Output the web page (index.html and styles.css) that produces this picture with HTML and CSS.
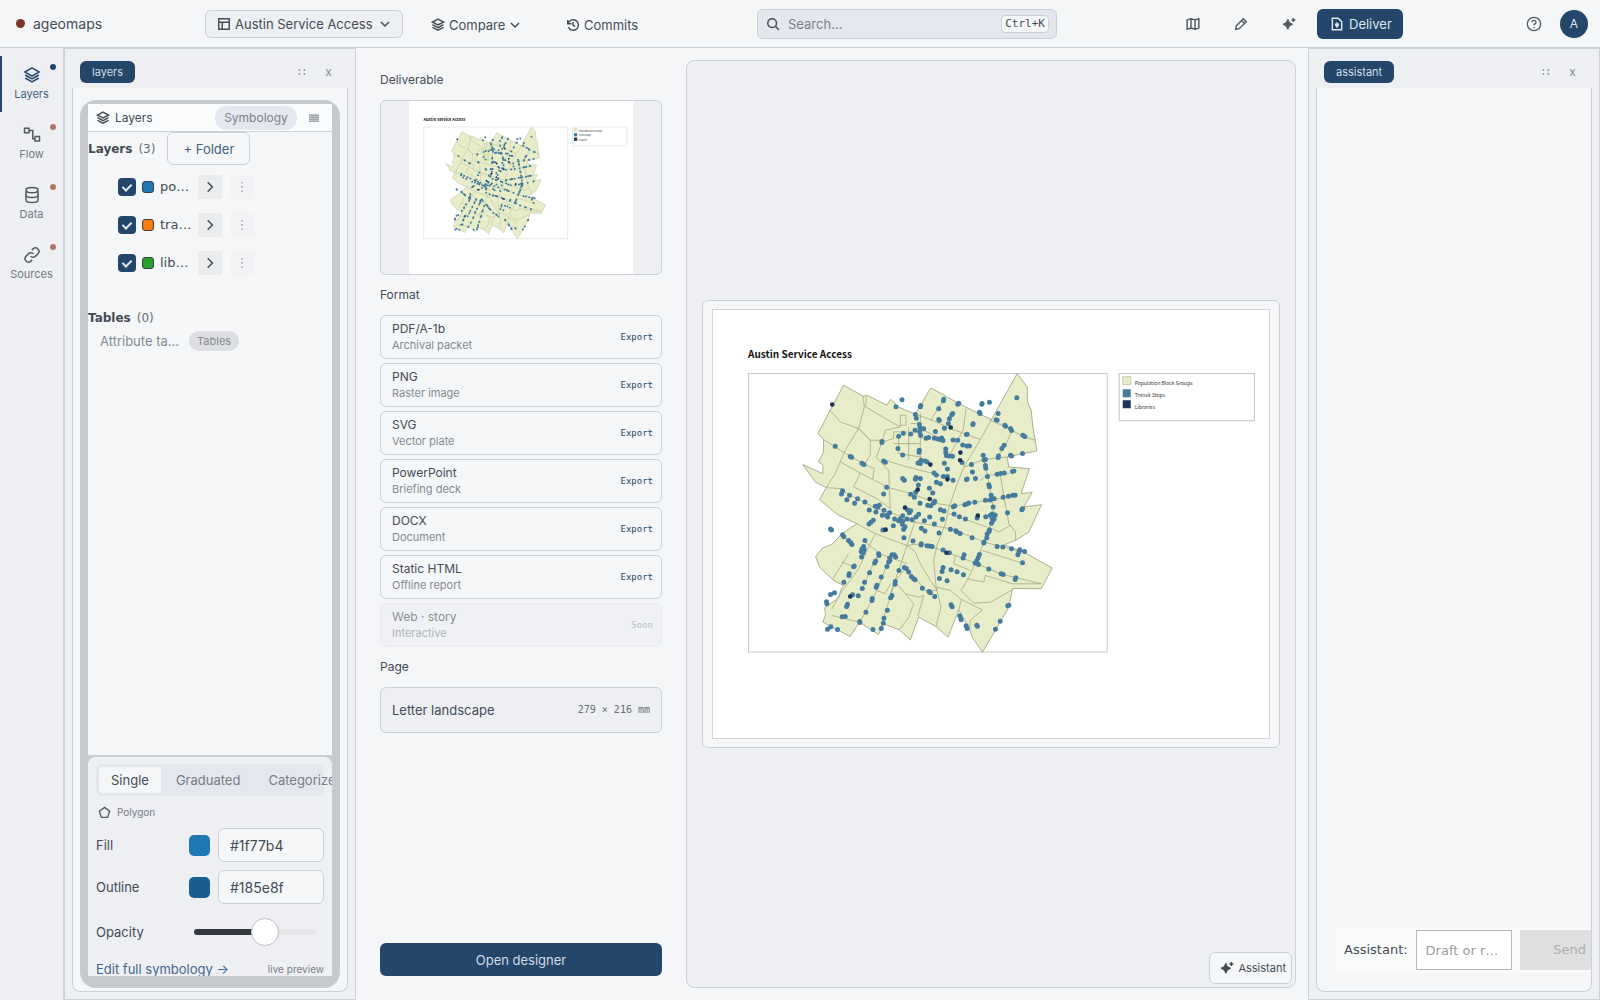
FILE: index.html
```html
<!DOCTYPE html>
<html lang="en">
<head>
<meta charset="utf-8">
<title>ageomaps</title>
<link rel="stylesheet" href="styles.css">
</head>
<body>
<svg class="defs" aria-hidden="true">
  <symbol id="i-layers" viewBox="0 0 24 24"><path d="M12 2.500 21.500 8 12 13.500 2.500 8ZM3 12l9 5.200L21 12M3 16l9 5.200L21 16"/></symbol>
  <symbol id="i-stack" viewBox="0 0 24 24"><path d="M12 2 21.500 7 12 12 2.500 7ZM2.500 11.500l9.500 5 9.500-5M2.500 16l9.500 5 9.500-5"/></symbol>
  <symbol id="i-flow" viewBox="0 0 24 24"><path d="M2 3h6v6H2zM16 14h6v6h-6zM8 6h5v11h3"/></symbol>
  <symbol id="i-data" viewBox="0 0 24 24"><path d="M4 5.500C4 1 20 1 20 5.500v13C20 23 4 23 4 18.500ZM4 5.500C4 10 20 10 20 5.500M4 12c0 4.500 16 4.500 16 0"/></symbol>
  <symbol id="i-link" viewBox="0 0 24 24"><path d="M10 13.500a4.500 4.500 0 0 0 6.500.3l3.500-3.500a4.600 4.600 0 0 0-6.500-6.500L11.800 5.500M14 10.500a4.500 4.500 0 0 0-6.500-.3L4 13.700a4.600 4.600 0 0 0 6.500 6.500l1.700-1.700"/></symbol>
  <symbol id="i-layout" viewBox="0 0 24 24"><path d="M3 3h18v18H3zM3 9h18M9 9v12"/></symbol>
  <symbol id="i-down" viewBox="0 0 24 24"><path d="m4 8 8 8 8-8"/></symbol>
  <symbol id="i-right" viewBox="0 0 24 24"><path d="m8 4 8 8-8 8"/></symbol>
  <symbol id="i-history" viewBox="0 0 24 24"><path d="M3.500 10A9 9 0 1 1 4 15.500M3 3.500V10h6.500M12 7v5.500l4 2"/></symbol>
  <symbol id="i-search" viewBox="0 0 24 24"><circle cx="10.500" cy="10.500" r="7.500"/><path d="m16 16 6 6"/></symbol>
  <symbol id="i-map" viewBox="0 0 24 24"><path d="m2 5 6.500-2 7 2L22 3v16l-6.500 2-7-2L2 21ZM8.500 3v16M15.500 5v16"/></symbol>
  <symbol id="i-pencil" viewBox="0 0 24 24"><path d="m3 21 1-6L16 3l5 5L9 20ZM13 6l5 5"/></symbol>
  <symbol id="i-spark" viewBox="0 0 24 24"><path fill="currentColor" d="M10 4c.6 5 3 7.500 8 8.500-5 1-7.400 3.500-8 8.500-.6-5-3-7.500-8-8.500 5-1 7.400-3.500 8-8.500Z"/><path d="M19.500 1.500v7M16 5h7"/></symbol>
  <symbol id="i-file" viewBox="0 0 24 24"><path d="M4 2h10l6 6v14H4zM12 9v7m-3.500-3.500h7M9.500 13l2.500 4 2.500-4"/></symbol>
  <symbol id="i-help" viewBox="0 0 24 24"><circle cx="12" cy="12" r="10"/><path d="M9 9.500c0-4 6-4 6 0 0 2.300-3 2.300-3 4.700M12 16.500v2"/></symbol>
  <symbol id="i-menu" viewBox="0 0 24 24"><path d="M2 6h20M2 10h20M2 14h20M2 18h20"/></symbol>
  <symbol id="i-poly" viewBox="0 0 24 24"><path d="m12 2.500 9.500 7-3.700 11.500H6.200L2.500 9.500Z"/></symbol>
  <symbol id="plate" viewBox="0 0 557 430">
    <path fill="#fff" d="M0 0h557v430H0z"/>
    <text x="36" y="49" class="plate-title">Austin Service Access</text>
    <path class="plate-frame" d="M36.500 64.500h358v278h-358zM406.500 64.500h135v47h-135z"/>
    <path fill="#e7edc8" stroke="#a9ad88" stroke-width=".5" d="M410 67.500h8v8h-8z"/>
    <path fill="#457b9d" d="M410 80h8v8h-8z"/>
    <path fill="#1d3557" d="M410 91h8v8h-8z"/>
    <g class="plate-key"><text x="422" y="76">Population Block Groups</text><text x="422" y="88">Transit Stops</text><text x="422" y="100">Libraries</text></g>
    <g transform="translate(78 51) scale(.3333)">
      <path class="land" d="M160 75 218 108 232 106 290 135 300 118 312 126 318 138 375 162 421 83 500 127 565 160 603 178 680 40 710 80 711 125 722 150 727 200 739 272 650 290 655 320 717 325 700 375 692 400 725 396 700 440 753 433 715 515 675 540 642 553 700 575 785 623 752 685 666 684 655 740 620 800 576 875 545 830 537 805 505 748 473 830 435 797 385 770 360 838 327 808 280 790 265 822 208 785 180 828 98 785 106 762 103 742 145 712 152 688 160 675 130 660 88 620 76 588 98 562 125 552 155 520 200 490 145 465 88 418 108 382 75 365 38 313 98 340 98 315 85 305 100 275 100 238 83 220 120 150Z"/>
      <path class="bounds" d="M120 150 150 185 205 205 240 240H275M218 108 222 140 205 205 165 270 135 340 108 382 155 385M205 205 240 240 240 285 222 312M100 238 150 270 222 312 252 325 247 355M150 305 210 338 295 382M210 338 190 380 260 415 300 445 295 330 258 292 275 245 285 210 330 200V165h17v30h-15M228 110 226 140 260 160 290 178 330 200M275 245 310 235v-20h40M310 250h80M325 230v50l65 10M355 200v100M390 160v140M375 162 390 205 460 240M421 180 440 150 461 118M361 190h30v40M285 300 350 320 430 340 490 360M527 145 518 210 475 290M375 162 430 182 480 205 570 238M603 178 570 238 520 320 495 385 475 445 465 490 440 555 430 600 437 680 452 740 437 797M290 380 370 402 440 430 490 437 605 418 680 405M520 320 580 298 650 290M570 360 590 345 655 340M600 180 655 205 700 230 735 240M665 210 645 255 620 290M630 345 640 410 650 460 655 490 675 515V540M580 298 592 350 605 420 610 470 580 545 555 610 530 660 512 690 550 728 600 725 666 688M580 545 700 575M575 570 695 608M155 390 190 410 250 440 310 460 370 485 480 505 545 530 580 545M200 490 255 520 350 555 395 550 470 575 560 610 630 640 752 670M475 460 590 500M255 520 230 570 205 625 150 700 125 745M225 545 270 580 350 610M265 580 235 640 215 690M300 590 255 700 225 755 208 785M350 620 315 660 290 740 270 805M375 480 350 555 325 630 300 700M350 555 375 575 390 610 420 660 440 690M437 680 480 690 513 717 575 748 540 780 537 805M340 620 380 660 405 690 440 690M530 655 580 665 585 645 665 670 752 670M495 585 490 610 540 630M513 717 505 748M300 670 285 700 260 690M315 665 345 700 385 710 400 705 382 768M345 700 370 730 355 770 327 808M125 765 208 785M155 605 195 620M175 580 128 655M605 505 625 515 660 495"/>
      <path class="stops" d="M335 119h0M317 140h0M391 136h0M390 140h0M460 117h0M459 122h0M445 146h0M505 129h0M502 132h0M575 130h0M574 132h0M597 126h0M567 156h0M569 160h0M679 113h0M623 160h0M617 179h0M620 180h0M375 163h0M378 174h0M487 160h0M484 164h0M477 176h0M445 178h0M447 180h0M474 190h0M462 204h0M548 191h0M547 193h0M643 195h0M645 198h0M660 205h0M663 211h0M697 225h0M703 229h0M387 193h0M389 203h0M400 206h0M388 215h0M391 226h0M374 210h0M361 221h0M339 219h0M325 228h0M435 214h0M530 222h0M528 223h0M407 234h0M415 232h0M432 234h0M443 236h0M454 233h0M458 241h0M449 238h0M488 239h0M502 240h0M517 254h0M530 257h0M537 257h0M275 244h0M275 247h0M135 258h0M323 265h0M337 284h0M387 270h0M386 276h0M466 266h0M466 276h0M468 286h0M477 287h0M486 288h0M641 255h0M634 265h0M624 287h0M623 292h0M660 285h0M663 287h0M696 280h0M578 285h0M585 298h0M581 299h0M180 289h0M184 291h0M215 309h0M221 313h0M280 302h0M285 306h0M383 308h0M392 300h0M390 310h0M405 302h0M410 305h0M462 309h0M471 326h0M515 307h0M543 313h0M546 335h0M585 316h0M586 324h0M431 338h0M438 344h0M459 349h0M471 349h0M488 360h0M530 356h0M528 358h0M555 355h0M591 349h0M620 342h0M630 340h0M641 338h0M666 334h0M670 332h0M337 355h0M342 360h0M377 352h0M375 357h0M390 355h0M384 374h0M438 366h0M450 370h0M417 384h0M427 398h0M289 381h0M280 401h0M361 402h0M376 396h0M372 411h0M595 373h0M597 379h0M157 391h0M154 401h0M178 405h0M170 418h0M202 415h0M193 429h0M224 425h0M389 429h0M433 423h0M430 428h0M412 435h0M421 436h0M602 405h0M604 415h0M611 415h0M599 419h0M585 420h0M638 411h0M654 408h0M667 405h0M674 405h0M553 426h0M535 428h0M529 431h0M523 433h0M493 436h0M489 439h0M608 440h0M696 445h0M694 448h0M651 457h0M267 435h0M255 438h0M262 441h0M237 449h0M257 455h0M281 450h0M298 457h0M276 465h0M289 465h0M292 470h0M352 449h0M361 451h0M357 457h0M385 462h0M450 448h0M461 452h0M491 461h0M507 469h0M525 476h0M456 477h0M418 470h0M402 481h0M432 491h0M377 470h0M365 478h0M350 476h0M337 466h0M330 475h0M337 483h0M325 481h0M313 476h0M336 492h0M344 499h0M340 507h0M309 496h0M249 480h0M242 486h0M236 491h0M278 509h0M341 532h0M368 542h0M393 504h0M404 512h0M446 518h0M586 469h0M600 465h0M605 461h0M614 464h0M605 473h0M611 476h0M606 483h0M603 489h0M597 508h0M596 513h0M590 521h0M589 532h0M581 545h0M580 548h0M560 473h0M480 507h0M496 511h0M499 514h0M509 519h0M545 532h0M121 506h0M124 509h0M157 523h0M161 529h0M175 540h0M181 546h0M185 552h0M224 540h0M220 558h0M215 566h0M222 567h0M213 574h0M219 577h0M214 590h0M393 550h0M392 554h0M410 556h0M417 557h0M425 558h0M458 569h0M477 577h0M521 583h0M518 593h0M567 582h0M563 592h0M559 601h0M554 608h0M564 612h0M620 558h0M637 560h0M663 565h0M688 568h0M685 575h0M682 583h0M702 573h0M696 607h0M595 626h0M632 640h0M638 642h0M676 652h0M674 657h0M265 580h0M266 585h0M256 602h0M253 608h0M238 637h0M192 617h0M190 619h0M177 640h0M176 645h0M161 665h0M223 665h0M216 684h0M260 674h0M258 680h0M273 650h0M305 583h0M312 583h0M298 593h0M299 600h0M295 605h0M290 618h0M316 590h0M326 630h0M342 621h0M348 624h0M355 635h0M363 648h0M370 655h0M374 658h0M315 663h0M314 671h0M305 705h0M301 712h0M396 683h0M416 693h0M420 697h0M433 708h0M458 621h0M455 633h0M447 654h0M470 661h0M482 628h0M500 634h0M519 643h0M121 702h0M133 697h0M109 724h0M110 730h0M187 703h0M204 706h0M246 714h0M245 720h0M172 731h0M169 738h0M227 755h0M291 749h0M281 773h0M279 788h0M273 804h0M248 807h0M208 783h0M209 786h0M156 769h0M165 768h0M112 806h0M122 799h0M142 807h0M482 733h0M485 739h0M508 766h0M511 773h0M512 778h0M527 796h0M530 804h0M559 794h0M561 797h0M655 734h0M652 736h0M629 782h0M615 806h0"/>
      <path class="libs" d="M126 133h0M481 202h0M510 277h0M509 300h0M420 313h0M471 357h0M382 388h0M418 416h0M344 442h0M562 466h0M286 508h0M468 577h0M180 708h0"/>
    </g>
  </symbol>
</svg>

<header class="top">
  <div class="brand"><span class="brand-dot"></span>ageomaps</div>
  <button class="project"><svg class="ico"><use href="#i-layout"/></svg>Austin Service Access<svg class="ico chev"><use href="#i-down"/></svg></button>
  <button class="plain compare"><svg class="ico"><use href="#i-stack"/></svg>Compare<svg class="ico chev"><use href="#i-down"/></svg></button>
  <button class="plain commits"><svg class="ico"><use href="#i-history"/></svg>Commits</button>
  <label class="search"><svg class="ico"><use href="#i-search"/></svg><input type="text" placeholder="Search..." aria-label="Search"><kbd>Ctrl+K</kbd></label>
  <div class="tools">
    <button class="tool" aria-label="Map"><svg class="ico"><use href="#i-map"/></svg></button>
    <button class="tool" aria-label="Edit"><svg class="ico"><use href="#i-pencil"/></svg></button>
    <button class="tool" aria-label="Generate"><svg class="ico"><use href="#i-spark"/></svg></button>
  </div>
  <button class="deliver"><svg class="ico"><use href="#i-file"/></svg>Deliver</button>
  <div class="account">
    <button class="tool" aria-label="Help"><svg class="ico help"><use href="#i-help"/></svg></button>
    <button class="avatar">A</button>
  </div>
</header>

<div class="shell">
  <nav class="rail">
    <a href="#layers" class="active"><svg class="ico"><use href="#i-layers"/></svg>Layers</a>
    <a href="#flow"><svg class="ico"><use href="#i-flow"/></svg>Flow</a>
    <a href="#data"><svg class="ico"><use href="#i-data"/></svg>Data</a>
    <a href="#sources"><svg class="ico"><use href="#i-link"/></svg>Sources</a>
  </nav>

  <section class="dock left">
    <div class="dock-bar"><button class="tab">layers</button><button class="mini">∷</button><button class="mini">x</button></div>
    <div class="dock-body">
      <div class="frame">
        <div class="frame-head"><svg class="ico"><use href="#i-stack"/></svg><span class="grow">Layers</span><button class="chip">Symbology</button><button class="tool burger" aria-label="Menu"><svg class="ico"><use href="#i-menu"/></svg></button></div>
        <div class="tree">
          <div class="tree-head"><b>Layers</b><span>(3)</span><button class="folder">+ Folder</button></div>
          <ul>
            <li><label><input type="checkbox" checked><i class="swatch blue"></i><span>po…</span></label><button class="open" aria-label="Open"><svg class="ico"><use href="#i-right"/></svg></button><button class="more">⋮</button></li>
            <li><label><input type="checkbox" checked><i class="swatch orange"></i><span>tra…</span></label><button class="open" aria-label="Open"><svg class="ico"><use href="#i-right"/></svg></button><button class="more">⋮</button></li>
            <li><label><input type="checkbox" checked><i class="swatch green"></i><span>lib…</span></label><button class="open" aria-label="Open"><svg class="ico"><use href="#i-right"/></svg></button><button class="more">⋮</button></li>
          </ul>
          <div class="tree-head tables"><b>Tables</b><span>(0)</span></div>
          <div class="attr"><span>Attribute ta…</span><button class="pill">Tables</button></div>
        </div>
        <div class="style">
          <div class="seg"><button class="on">Single</button><button>Graduated</button><button>Categorized</button></div>
          <div class="geom"><svg class="ico"><use href="#i-poly"/></svg>Polygon</div>
          <div class="row"><label for="fill">Fill</label><i class="color fill"></i><input id="fill" type="text" value="#1f77b4"></div>
          <div class="row"><label for="outline">Outline</label><i class="color line"></i><input id="outline" type="text" value="#185e8f"></div>
          <div class="row opacity"><label for="opacity">Opacity</label><input id="opacity" type="range" min="0" max="100" value="60"></div>
          <div class="foot"><a href="#symbology">Edit full symbology →</a><small>live preview</small></div>
        </div>
      </div>
    </div>
  </section>

  <main class="deliverable">
    <aside class="options">
      <h2>Deliverable</h2>
      <div class="thumb"><svg viewBox="0 0 557 430"><use href="#plate"/></svg></div>
      <h2>Format</h2>
      <div class="formats">
        <button><span>PDF/A-1b<small>Archival packet</small></span><em>Export</em></button>
        <button><span>PNG<small>Raster image</small></span><em>Export</em></button>
        <button><span>SVG<small>Vector plate</small></span><em>Export</em></button>
        <button><span>PowerPoint<small>Briefing deck</small></span><em>Export</em></button>
        <button><span>DOCX<small>Document</small></span><em>Export</em></button>
        <button><span>Static HTML<small>Offline report</small></span><em>Export</em></button>
        <button disabled><span>Web · story<small>Interactive</small></span><em>Soon</em></button>
      </div>
      <h2>Page</h2>
      <button class="page-size">Letter landscape<em>279 × 216 mm</em></button>
      <button class="designer">Open designer</button>
    </aside>
    <section class="canvas">
      <div class="sheet"><svg viewBox="0 0 557 430"><use href="#plate"/></svg></div>
      <button class="ask"><svg class="ico"><use href="#i-spark"/></svg>Assistant</button>
    </section>
  </main>

  <section class="dock right">
    <div class="dock-bar"><button class="tab">assistant</button><button class="mini">∷</button><button class="mini">x</button></div>
    <div class="dock-body">
      <form class="chat"><label for="draft">Assistant:</label><input id="draft" type="text" placeholder="Draft or r…"><button type="button" disabled>Send</button></form>
    </div>
  </section>
</div>
</body>
</html>
```
FILE: styles.css
```css
:root {
  --bg: #f4f6f8;
  --panel: #edeff3;
  --sunk: #e4e7ed;
  --line: #ccd0d5;
  --navy: #25466b;
  --ink: #454c56;
  --muted: #858a92;
  --ui: Inter, "Noto Sans", sans-serif;
  --mono: "DejaVu Sans Mono", "Liberation Mono", monospace;
  --sys: "DejaVu Sans", sans-serif;
  --print: "Noto Sans CJK SC", "Noto Sans", sans-serif;
}
* { box-sizing: border-box; }
html, body { height: 100%; }
body { margin: 0; display: flex; flex-direction: column; overflow: hidden; background: var(--bg); color: var(--ink); font: 13px/16px var(--ui); }
button, input { font: inherit; color: inherit; margin: 0; }
button { border: 0; background: none; padding: 0; cursor: pointer; white-space: nowrap; }
.defs { display: none; }
.ico { width: 14px; height: 14px; flex: none; fill: none; stroke: currentColor; stroke-width: 2.5; }
.chev { width: 12px; height: 12px; stroke-width: 3; }

.top { flex: none; height: 48px; display: flex; align-items: center; border-bottom: 1px solid var(--line); padding: 0 12px 0 16px; font-size: 13px; }
.brand { display: flex; align-items: center; gap: 8px; width: 189px; font-size: 14px; }
.brand-dot { width: 9px; height: 9px; border-radius: 50%; background: #7a3829; }
.project { display: flex; align-items: center; gap: 4px; width: 198px; height: 28px; padding: 0 11px; background: var(--panel); border: 1px solid var(--line); border-radius: 6px; }
.project .chev { margin-left: auto; }
.plain { display: flex; align-items: center; gap: 4px; padding-top: 2px; }
.compare { margin-left: 28px; width: 108px; }
.commits { margin-left: 27px; width: 98px; }
.search { display: flex; align-items: center; gap: 8px; width: 300px; height: 30px; margin-left: 93px; margin-right: auto; padding: 0 7px 0 8px; background: var(--sunk); border: 1px solid var(--line); border-radius: 6px; }
.search input { flex: 1; min-width: 0; border: 0; background: none; padding: 0; outline: 0; }
.search input::placeholder { color: #7b818a; opacity: 1; }
kbd { padding: 0 3px; background: var(--bg); border: 1px solid var(--line); border-radius: 4px; font: 11px/16px var(--mono); }
.tool { width: 24px; height: 24px; display: grid; place-items: center; color: #545a62; }
.tools { display: flex; gap: 24px; margin-right: 16px; }
.deliver { display: flex; align-items: center; gap: 5px; width: 86px; height: 30px; padding: 0 13px; border-radius: 6px; background: var(--navy); color: #dce4ec; }
.account { display: flex; align-items: center; gap: 14px; margin-left: 119px; }
.help { width: 16px; height: 16px; stroke-width: 2; }
.avatar { width: 28px; height: 28px; border-radius: 50%; background: var(--navy); color: #dce4ec; font-size: 12px; }

.shell { flex: 1; min-height: 0; display: flex; }
.rail { flex: none; width: 64px; padding-top: 8px; background: var(--panel); border-right: 1px solid var(--line); display: flex; flex-direction: column; gap: 4px; }
.rail a { position: relative; height: 56px; padding-top: 10px; display: flex; flex-direction: column; align-items: center; gap: 2px; color: #747a83; text-decoration: none; font-size: 11px; line-height: 16px; }
.rail .ico { width: 18px; height: 18px; stroke-width: 2; color: #555b63; }
.rail a::after { content: ""; position: absolute; right: 7px; top: 8px; width: 6px; height: 6px; border-radius: 50%; background: #ad7766; }
.rail .active { box-shadow: inset 2px 0 0 var(--navy); color: #45617f; }
.rail .active .ico { color: var(--navy); }
.rail .active::after { background: var(--navy); }

.dock { flex: none; display: flex; flex-direction: column; width: 292px; background: var(--panel); border: 1px solid var(--line); padding: 0 7px 7px; }
.dock-bar { height: 39px; padding: 7px 10px 0 8px; display: flex; align-items: center; gap: 8px; }
.tab { height: 22px; padding: 0 12px; margin-right: auto; border-radius: 6px; background: var(--navy); color: #cfdae5; font-size: 11px; }
.mini { width: 19px; color: var(--muted); font-size: 12px; }
.dock-body { flex: 1; min-height: 0; display: flex; flex-direction: column; background: var(--bg); border: 1px solid var(--line); border-top: 0; border-radius: 0 0 8px 8px; padding: 12px 7px 3px; overflow: hidden; }
.frame { flex: 1; min-height: 0; display: flex; flex-direction: column; background: #c6c9cd; border-radius: 16px; padding: 4px 8px 12px; }
.frame-head { flex: none; height: 28px; display: flex; align-items: center; gap: 5px; padding: 0 6px 0 8px; background: #fafbfc; border-bottom: 1px solid var(--line); font-size: 12px; }
.grow { flex: 1; }
.chip { width: 82px; height: 24px; border-radius: 12px; background: var(--sunk); color: #7d838c; font-size: 12px; }
.burger .ico { width: 12px; height: 12px; color: var(--muted); }
.tree { flex: 1; min-height: 0; background: var(--bg); border-bottom: 1px solid var(--line); font-family: var(--sys); }
.tree-head { display: flex; align-items: center; font-size: 12px; }
.tree-head span { margin-left: 6px; width: 29px; color: #686e77; }
.folder { width: 83px; height: 33px; border: 1px solid var(--line); border-radius: 6px; font: 13px/16px var(--ui); color: #45617f; }
ul { list-style: none; margin: 3px 0 0; padding: 0 0 0 30px; }
li { display: flex; align-items: center; gap: 6px; height: 38px; font-size: 13px; }
li label { display: flex; align-items: center; gap: 6px; width: 74px; }
[type="checkbox"] { appearance: none; width: 18px; height: 18px; border-radius: 4px; background: var(--navy); display: grid; place-items: center; }
[type="checkbox"]::after { content: ""; width: 4px; height: 7px; margin-bottom: 2px; border: solid #e8edf2; border-width: 0 2px 2px 0; transform: rotate(45deg); }
.swatch { width: 12px; height: 12px; border: 1px solid #33404e; border-radius: 3px; }
.blue { background: #1f77b4; }
.orange { background: #ff7f0e; }
.green { background: #2ca02c; }
.open, .more { width: 24px; height: 24px; display: grid; place-items: center; background: #eaecee; }
.more { margin-left: 2px; background: #f1f3f5; color: #9ba0a6; }
.tables { margin-top: 28px; }
.attr { display: flex; align-items: center; gap: 10px; padding: 5px 12px 0; font: 13px/20px var(--ui); color: var(--muted); }
.pill { height: 20px; padding: 0 8px; border-radius: 10px; background: #dcdee1; font-size: 11px; }
.style { flex: none; height: 220px; overflow: hidden; background: var(--panel); border-top: 1px solid var(--line); border-radius: 8px 8px 0 0; padding: 7px 8px; }
.seg { display: flex; gap: 2px; height: 32px; padding: 3px; background: var(--sunk); border-radius: 6px; color: #777d86; }
.seg button { flex: none; padding: 0 13px; border-radius: 4px; }
.seg .on { padding: 0 12px; background: var(--bg); color: var(--ink); }
.geom { display: flex; align-items: center; gap: 6px; height: 32px; padding-left: 2px; font-size: 10px; color: #777d86; }
.geom .ico { width: 13px; height: 13px; color: #555b63; }
.row { display: flex; align-items: center; height: 34px; margin-bottom: 8px; }
.row label { flex: 1; }
.color { width: 21px; height: 21px; margin-right: 8px; border-radius: 5px; }
.fill { background: #1f77b4; }
.line { background: #185e8f; }
.row [type="text"] { width: 106px; height: 34px; padding: 0 11px; background: var(--bg); border: 1px solid var(--line); border-radius: 6px; outline: 0; font-size: 14px; }
.opacity { height: 40px; margin-bottom: 5px; }
[type="range"] { appearance: none; width: 123px; height: 28px; margin-right: 7px; background: none; }
[type="range"]::-webkit-slider-runnable-track { height: 6px; border-radius: 3px; background: linear-gradient(90deg, #36383f 58%, #e4e6e8 58%); }
[type="range"]::-webkit-slider-thumb { appearance: none; width: 28px; height: 28px; margin-top: -11px; border-radius: 50%; background: #fff; border: 1px solid #b9bcc0; }
.foot { display: flex; align-items: center; justify-content: space-between; height: 24px; }
.foot a { color: #45678d; text-decoration: none; }
.foot small { font-size: 10px; color: #777d86; }

.deliverable { flex: 1; min-width: 0; display: flex; gap: 24px; padding: 12px 12px 12px 24px; }
.options { flex: none; width: 282px; display: flex; flex-direction: column; padding-bottom: 12px; }
h2 { margin: 12px 0; font-size: 12px; line-height: 16px; font-weight: 400; }
.thumb { height: 175px; display: flex; justify-content: center; background: var(--panel); border: 1px solid var(--line); border-radius: 6px; }
.thumb svg { height: 173px; }
.formats { display: flex; flex-direction: column; gap: 4px; }
.formats button { display: flex; align-items: center; justify-content: space-between; height: 44px; padding: 0 8px 0 11px; border: 1px solid var(--line); border-radius: 6px; text-align: left; font-size: 12px; line-height: 16px; }
.formats small { display: block; font-size: 11px; color: var(--muted); }
.formats em { font: 9px/16px var(--mono); color: #25466b; }
.formats button:disabled { background: #eceff3; border-color: #e4e7eb; opacity: .6; }
.formats button:disabled em { color: #92979e; }
.page-size { height: 46px; display: flex; align-items: center; justify-content: space-between; padding: 0 11px; background: var(--panel); border: 1px solid var(--line); border-radius: 6px; }
.page-size em { font: 10px/16px var(--mono); color: #686e77; }
.designer { height: 33px; margin-top: auto; border-radius: 6px; background: var(--navy); color: #cfdae5; }

.canvas { position: relative; flex: 1; min-width: 0; display: flex; align-items: center; padding: 0 15px; background: var(--panel); border: 1px solid var(--line); border-radius: 8px; }
.sheet { flex: 1; padding: 8px 9px; background: var(--bg); border: 1px solid var(--line); border-radius: 6px; }
.sheet svg { display: block; width: 100%; outline: 1px solid #d3d6d9; outline-offset: -1px; }
.plate-title { font: bold 10px var(--print); fill: #151515; }
.plate-key { font: 5px var(--print); fill: #333; }
.plate-frame { fill: none; stroke: #c4c7ca; stroke-width: 1; }
.land { fill: #e7edc8; stroke: #8b8d68; stroke-width: 2; }
.bounds { fill: none; stroke: #9b9c78; stroke-width: 2; }
.stops { fill: none; stroke: #457b9d; stroke-width: 15; stroke-linecap: round; }
.libs { fill: none; stroke: #1d3557; stroke-width: 14; stroke-linecap: round; }
.ask { position: absolute; right: 3px; bottom: 3px; height: 32px; display: flex; align-items: center; gap: 4px; padding: 0 5px 0 10px; background: var(--bg); border: 1px solid var(--line); border-radius: 6px; font-size: 11px; }

.right .dock-body { justify-content: flex-end; padding: 0 0 18px 19px; }
.chat { display: flex; align-items: center; gap: 8px; height: 46px; padding: 0 8px; background: #f9fafa; font: 13px/20px var(--sys); }
.chat label { flex: none; }
.chat input { flex: none; width: 96px; height: 40px; padding: 0 9px; background: #fff; border: 1px solid #b5b8bb; border-radius: 0; outline: 0; }
.chat input::placeholder { color: #989ca1; opacity: 1; }
.chat button { flex: none; width: 100px; height: 40px; background: #dfe0e1; color: #a9acaf; }
```
